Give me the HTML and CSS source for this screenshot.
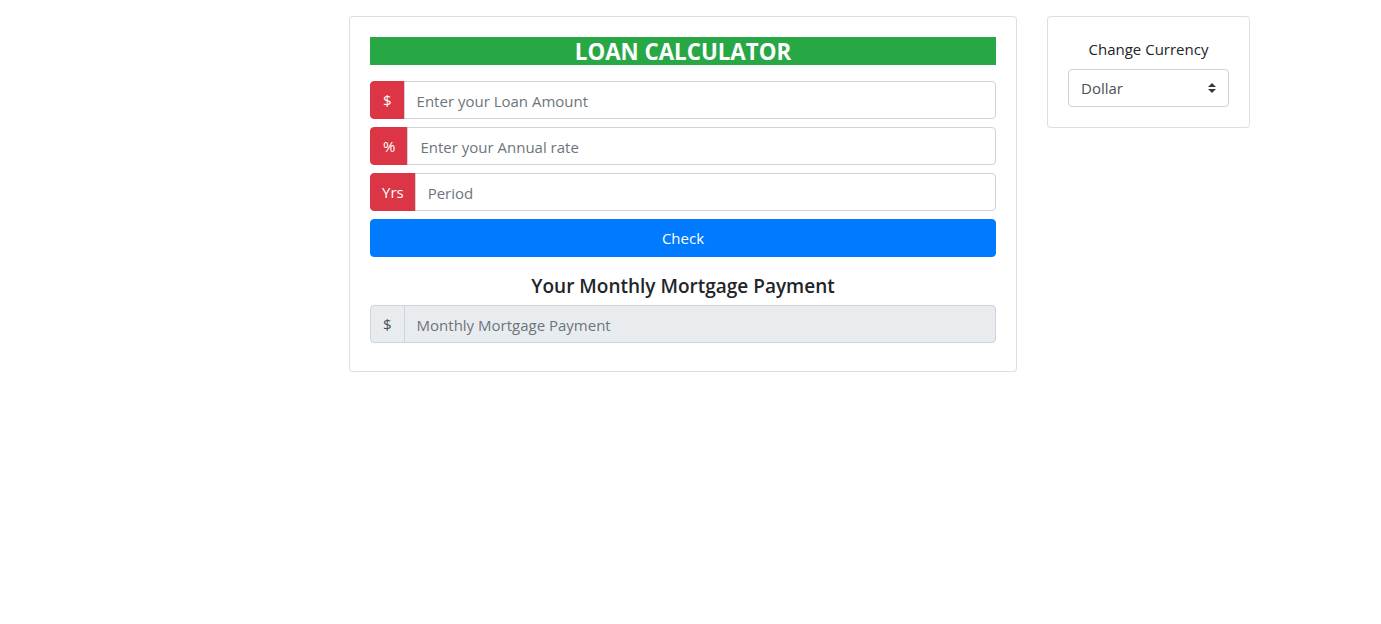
FILE: index.html
```html
<!DOCTYPE html>
<html lang="en">
<head>
<meta charset="utf-8">
<title>Loan Calculator</title>
<link rel="stylesheet" href="styles.css">
</head>
<body>
<div class="page">
  <div class="card main-card">
    <h3 class="title">LOAN CALCULATOR</h3>
    <div class="input-group">
      <span class="addon addon-red">$</span>
      <input class="field" type="text" placeholder="Enter your Loan Amount">
    </div>
    <div class="input-group">
      <span class="addon addon-red">%</span>
      <input class="field" type="text" placeholder="Enter your Annual rate">
    </div>
    <div class="input-group">
      <span class="addon addon-red addon-yrs">Yrs</span>
      <input class="field" type="text" placeholder="Period">
    </div>
    <button class="btn-check" type="button">Check</button>
    <h5 class="result-title">Your Monthly Mortgage Payment</h5>
    <div class="input-group">
      <span class="addon addon-gray">$</span>
      <input class="field field-disabled" type="text" placeholder="Monthly Mortgage Payment" disabled>
    </div>
  </div>
  <div class="card side-card">
    <label class="side-label" for="cur">Change Currency</label>
    <div class="select-wrap">
      <select id="cur" class="select">
        <option>Dollar</option>
        <option>Euro</option>
        <option>Pound</option>
      </select>
      <svg class="select-arrow" width="8" height="10" viewBox="0 0 8 10"><path d="M4 0 L8 4 H0 Z M4 10 L0 6 H8 Z" fill="#343a40"/></svg>
    </div>
  </div>
</div>
</body>
</html>
```
FILE: styles.css
```css
* { box-sizing: border-box; }
html, body { margin: 0; padding: 0; background: #fff; }
body {
  font-family: "Open Sans", "Noto Sans", sans-serif;
  font-size: 15px;
  line-height: 1.5;
  color: #212529;
}
.page {
  display: flex;
  align-items: flex-start;
  gap: 30px;
  padding: 16px 0 0 349px;
}
.card {
  border: 1px solid rgba(0,0,0,.125);
  border-radius: 4px;
  padding: 20px;
  background: #fff;
}
.main-card { width: 668px; }
.side-card { width: 203px; text-align: center; }
.title {
  margin: 0 0 16px;
  padding-top: 2px;
  background: #28a745;
  color: #fff;
  font-size: 22.3px;
  font-weight: 700;
  line-height: 26px;
  text-align: center;
}
.input-group {
  display: flex;
  height: 38px;
  margin-bottom: 8px;
}
.addon {
  display: flex;
  align-items: center;
  padding: 1px 12px 0;
  border: 1px solid #ced4da;
  border-radius: 4px 0 0 4px;
  font-size: 15px;
  white-space: nowrap;
}
.addon-yrs { padding: 1px 11px 0; }
.addon-red { background: #dc3545; border-color: #dc3545; color: #fff; }
.addon-gray { background: #e9ecef; color: #495057; }
.field {
  flex: 1;
  min-width: 0;
  height: 38px;
  margin-left: -1px;
  padding: 7px 12px 5px;
  border: 1px solid #ced4da;
  border-radius: 0 4px 4px 0;
  font: inherit;
  font-size: 15px;
  color: #495057;
  background: #fff;
}
.field::placeholder { color: #6c757d; opacity: 1; }
.field-disabled { background: #e9ecef; }
.btn-check {
  display: block;
  width: 100%;
  height: 38px;
  margin: 0 0 17px;
  padding-top: 1px;
  border: 1px solid #007bff;
  border-radius: 4px;
  background: #007bff;
  color: #fff;
  font: inherit;
  font-size: 15px;
  cursor: pointer;
}
.result-title {
  margin: 0 0 7px;
  font-size: 19px;
  font-weight: 600;
  line-height: 24px;
  text-align: center;
}
.side-label {
  display: block;
  margin-bottom: 8px;
  line-height: 24px;
  font-size: 15px;
}
.select-wrap { position: relative; }
.select {
  display: block;
  width: 100%;
  height: 38px;
  padding: 6px 28px 6px 12px;
  border: 1px solid #ced4da;
  border-radius: 4px;
  background: #fff;
  font: inherit;
  font-size: 15px;
  color: #495057;
  appearance: none;
  -webkit-appearance: none;
}
.select-arrow {
  position: absolute;
  right: 13px;
  top: 14px;
  pointer-events: none;
}
```
